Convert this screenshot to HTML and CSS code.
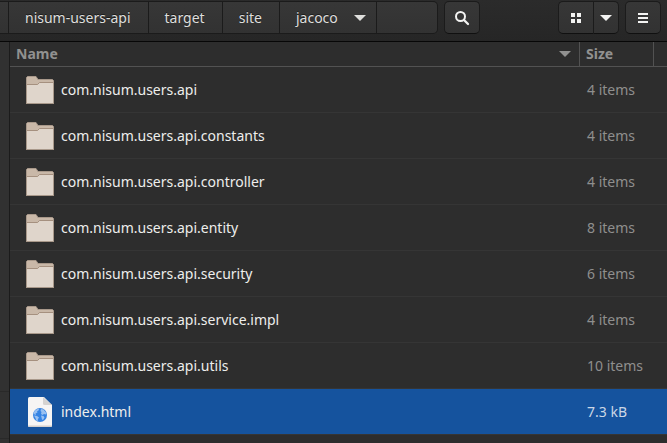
FILE: index.html
```html
<!DOCTYPE html>
<html lang="en">
<head>
<meta charset="utf-8">
<title>jacoco</title>
<link rel="stylesheet" href="styles.css">
</head>
<body>
<svg class="defs" aria-hidden="true">
  <symbol id="folder" viewBox="0 0 28 28">
    <path d="M1.500.5h8.500l2 3h14.500l1 1V27.500H.5V1.500z" fill="#c9b8a8" stroke="#a8988a"/>
    <path d="M1 9h10.500l2-2H27v20H1z" fill="#dfd5cb"/>
    <path d="M1 8.500h10.500l2-2H27" fill="none" stroke="#a5907f"/>
    <path d="M0 27.500h28" stroke="#a8988a"/>
  </symbol>
</svg>
<header class="toolbar">
  <nav class="path" aria-label="Path">
    <button class="crumb stub" aria-label="Parent folders"></button>
    <button class="crumb">nisum-users-api</button>
    <button class="crumb">target</button>
    <button class="crumb">site</button>
    <button class="crumb current">jacoco
      <svg width="12" height="6" viewBox="0 0 12 6" aria-hidden="true"><path d="M0 0h12L6 6z" fill="currentColor"/></svg>
    </button>
    <span class="rest"></span>
  </nav>
  <button class="tool" aria-label="Search">
    <svg width="16" height="16" viewBox="0 0 16 16" aria-hidden="true"><circle cx="6.500" cy="6.500" r="4.500" fill="none" stroke="currentColor" stroke-width="2"/><path d="M10 10l4 4" stroke="currentColor" stroke-width="2.300" stroke-linecap="round"/></svg>
  </button>
  <div class="views">
    <button class="tool grid" aria-label="Icon view">
      <svg width="10" height="10" viewBox="0 0 10 10" aria-hidden="true"><path d="M0 0h4v4H0zM6 0h4v4H6zM0 6h4v4H0zM6 6h4v4H6z" fill="currentColor"/></svg>
    </button>
    <button class="tool more" aria-label="View options">
      <svg width="12" height="6" viewBox="0 0 12 6" aria-hidden="true"><path d="M0 0h12L6 6z" fill="currentColor"/></svg>
    </button>
  </div>
  <button class="tool" aria-label="Menu">
    <svg width="10" height="10" viewBox="0 0 10 10" aria-hidden="true"><path d="M0 0h10v2H0zM0 4h10v2H0zM0 8h10v2H0z" fill="currentColor"/></svg>
  </button>
</header>
<div class="main">
  <aside class="sidebar"></aside>
  <main class="files">
    <table>
      <colgroup><col><col class="col-size"><col class="col-end"></colgroup>
      <thead>
        <tr>
          <th scope="col"><div class="sort">Name <svg width="12" height="6" viewBox="0 0 12 6" aria-hidden="true"><path d="M0 0h12L6 6z" fill="currentColor"/></svg></div></th>
          <th scope="col">Size</th>
          <td></td>
        </tr>
      </thead>
      <tbody>
        <tr><td><div class="file"><svg class="icon" aria-hidden="true"><use href="#folder"/></svg>com.nisum.users.api</div></td><td class="size">4 items</td><td></td></tr>
        <tr><td><div class="file"><svg class="icon" aria-hidden="true"><use href="#folder"/></svg>com.nisum.users.api.constants</div></td><td class="size">4 items</td><td></td></tr>
        <tr><td><div class="file"><svg class="icon" aria-hidden="true"><use href="#folder"/></svg>com.nisum.users.api.controller</div></td><td class="size">4 items</td><td></td></tr>
        <tr><td><div class="file"><svg class="icon" aria-hidden="true"><use href="#folder"/></svg>com.nisum.users.api.entity</div></td><td class="size">8 items</td><td></td></tr>
        <tr><td><div class="file"><svg class="icon" aria-hidden="true"><use href="#folder"/></svg>com.nisum.users.api.security</div></td><td class="size">6 items</td><td></td></tr>
        <tr><td><div class="file"><svg class="icon" aria-hidden="true"><use href="#folder"/></svg>com.nisum.users.api.service.impl</div></td><td class="size">4 items</td><td></td></tr>
        <tr><td><div class="file"><svg class="icon" aria-hidden="true"><use href="#folder"/></svg>com.nisum.users.api.utils</div></td><td class="size">10 items</td><td></td></tr>
        <tr class="selected"><td><div class="file"><svg class="icon page" viewBox="0 0 28 30" aria-hidden="true">
          <path d="M3.500 0H18l8 8v20.500a1.500 1.500 0 0 1-1.500 1.500h-21A1.500 1.500 0 0 1 2 28.500v-27A1.500 1.500 0 0 1 3.500 0z" fill="#f6f5f4"/>
          <path d="M2 28.500A1.500 1.500 0 0 0 3.500 30h21a1.500 1.500 0 0 0 1.500-1.500z" fill="#d5d0cc"/>
          <path d="M17 0l9 8h-7.500A1.500 1.500 0 0 1 17 6.500z" fill="#d5d3d1"/>
          <circle cx="14" cy="18" r="7" fill="#3584e4"/>
          <path d="M7.500 15.500l2-2.500 3-1.500.5 1.500-2 1.500.5 1-2 1 .5 1.500-1.500-.5zM8 18.500l3 .5 2 1.500-1 1.500-.5 2.500-1.500-1.500-.5-2zM15 12l2.500.5 2.500 3v2l-2-.5-1.500 1-1.500-1 .5-2-1-1zM15 18.500l2.500.5 1 1.500-1.500 2.500-1-.5-.5-2z" fill="#99c1f1"/>
        </svg>index.html</div></td><td class="size">7.3 kB</td><td></td></tr>
      </tbody>
    </table>
  </main>
</div>
</body>
</html>
```

FILE: styles.css
```css
* { box-sizing: border-box; }

body {
  margin: 0;
  height: 100vh;
  display: flex;
  flex-direction: column;
  overflow: hidden;
  background: #2d2d2d;
  color: #eeeeec;
  font: 14px/20px "Noto Sans", "Open Sans", sans-serif;
}

.defs { position: absolute; width: 0; height: 0; }

button {
  margin: 0;
  padding: 0;
  border: 0;
  background: none;
  color: inherit;
  font: inherit;
}

svg { display: block; flex: none; }

.toolbar {
  display: flex;
  flex: none;
  height: 42px;
  padding: 1px 6px 7px 0;
  border-bottom: 1px solid #070707;
  background: linear-gradient(#2b2b2b, #262626);
}

.path {
  display: flex;
  flex: 0 1 438px;
  margin-right: 6px;
  border: 1px solid #1b1b1b;
  border-left: 0;
  border-radius: 0 5px 5px 0;
  background: linear-gradient(#373737, #323232);
}

.crumb {
  padding: 0 17px 0 16px;
  border-right: 1px solid #1b1b1b;
  color: #dededc;
  text-shadow: 0 -1px #1b1b1b;
}

.crumb.stub { width: 9px; padding: 0; }

.current { display: flex; align-items: center; gap: 16px; padding-right: 10px; }

.rest { flex: 1; }

.tool {
  display: flex;
  flex: none;
  align-items: center;
  justify-content: center;
  width: 36px;
  border: 1px solid #1b1b1b;
  border-bottom-color: #101010;
  border-radius: 5px;
  background: linear-gradient(#373737, #323232);
  color: #f3f3f2;
}

.views { display: flex; margin: 0 6px 0 auto; }

.grid { width: 35px; border-right: 0; border-radius: 5px 0 0 5px; }
.more { width: 26px; border-radius: 0 5px 5px 0; }

.main { display: flex; flex: 1; min-height: 0; }

.sidebar {
  flex: none;
  width: 10px;
  border-right: 1px solid #1b1b1b;
  background: linear-gradient(#292929, #292929) 0 349px / 100% 1px no-repeat,
    linear-gradient(#292929, #292929) 0 396px / 100% 1px no-repeat, #313131;
}

.files { flex: 1; min-width: 0; }

table { width: 100%; table-layout: fixed; border-collapse: separate; border-spacing: 0; }

.col-size { width: 74px; }
.col-end { width: 13px; }

th, td { padding: 0; text-align: left; }

thead th, thead td { height: 25px; border-bottom: 1px solid #525252; }

th {
  padding: 0 6px;
  border-right: 1px solid #525252;
  color: #919190;
  font-weight: 700;
}

.sort { display: flex; align-items: center; justify-content: space-between; padding-right: 2px; }

tbody td { height: 46px; border-bottom: 1px solid #353535; white-space: nowrap; }

.file { display: flex; align-items: center; gap: 7px; padding-left: 16px; }

.icon { width: 28px; height: 28px; }
.page { height: 30px; }

.size { padding-left: 7px; color: #8f8f8e; }

.selected td { border-bottom-color: #353535; background: #15539e; background-clip: padding-box; }
.selected .size { color: #cbd7e6; }
```
